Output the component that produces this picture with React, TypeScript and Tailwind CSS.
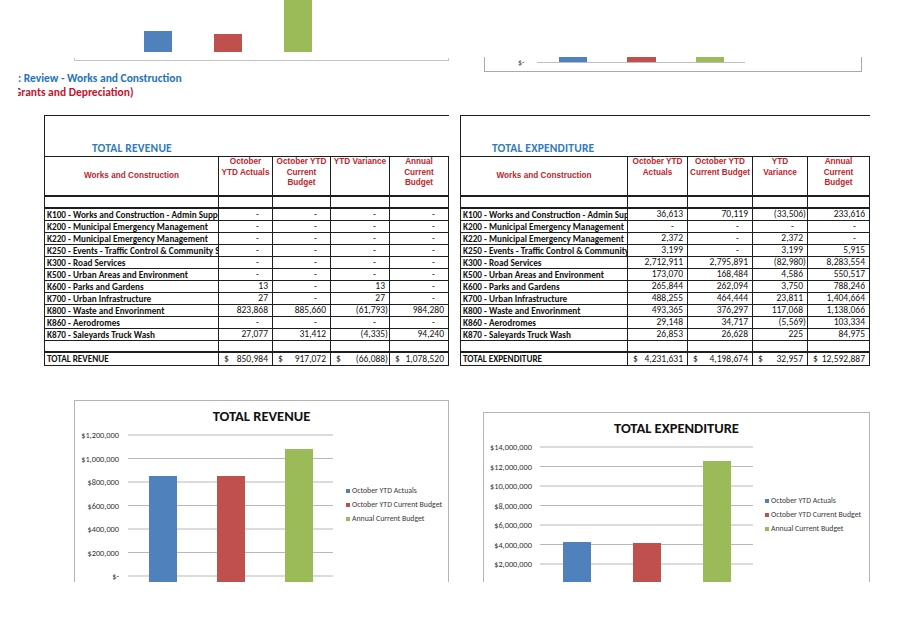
import React from "react";

const CAL = "font-['Carlito','Liberation_Sans_Narrow','Lato',sans-serif] lining-nums";
const ARIAL = "font-['Liberation_Sans',Arial,sans-serif]";
const SVGFONT = "Carlito, 'Liberation Sans Narrow', Lato, sans-serif";

type Row = { name: string; vals: string[] };

const revRows: Row[] = [
  { name: "K100 - Works and Construction - Admin Support", vals: ["-", "-", "-", "-"] },
  { name: "K200 - Municipal Emergency Management", vals: ["-", "-", "-", "-"] },
  { name: "K220 - Municipal Emergency Management", vals: ["-", "-", "-", "-"] },
  { name: "K250 - Events - Traffic Control & Community Safety", vals: ["-", "-", "-", "-"] },
  { name: "K300 - Road Services", vals: ["-", "-", "-", "-"] },
  { name: "K500 - Urban Areas and Environment", vals: ["-", "-", "-", "-"] },
  { name: "K600 - Parks and Gardens", vals: ["13", "-", "13", "-"] },
  { name: "K700 - Urban Infrastructure", vals: ["27", "-", "27", "-"] },
  { name: "K800 - Waste and Envorinment", vals: ["823,868", "885,660", "(61,793)", "984,280"] },
  { name: "K860 - Aerodromes", vals: ["-", "-", "-", "-"] },
  { name: "K870 - Saleyards Truck Wash", vals: ["27,077", "31,412", "(4,335)", "94,240"] },
];

const expRows: Row[] = [
  { name: "K100 - Works and Construction - Admin Support", vals: ["36,613", "70,119", "(33,506)", "233,616"] },
  { name: "K200 - Municipal Emergency Management", vals: ["-", "-", "-", "-"] },
  { name: "K220 - Municipal Emergency Management", vals: ["2,372", "-", "2,372", "-"] },
  { name: "K250 - Events - Traffic Control & Community Safety", vals: ["3,199", "-", "3,199", "5,915"] },
  { name: "K300 - Road Services", vals: ["2,712,911", "2,795,891", "(82,980)", "8,283,554"] },
  { name: "K500 - Urban Areas and Environment", vals: ["173,070", "168,484", "4,586", "550,517"] },
  { name: "K600 - Parks and Gardens", vals: ["265,844", "262,094", "3,750", "788,246"] },
  { name: "K700 - Urban Infrastructure", vals: ["488,255", "464,444", "23,811", "1,404,664"] },
  { name: "K800 - Waste and Envorinment", vals: ["493,365", "376,297", "117,068", "1,138,066"] },
  { name: "K860 - Aerodromes", vals: ["29,148", "34,717", "(5,569)", "103,334"] },
  { name: "K870 - Saleyards Truck Wash", vals: ["26,853", "26,628", "225", "84,975"] },
];

function padFor(v: string) {
  if (v === "-") return "pr-[13px]";
  if (v.startsWith("(")) return "pr-[1px]";
  return "pr-[4px]";
}

function Table(props: {
  title: string;
  titlePad: string;
  cols: string;
  headers: React.ReactNode[];
  rows: Row[];
  totalLabel: string;
  totals: string[];
}) {
  const { title, titlePad, cols, headers, rows, totalLabel, totals } = props;
  const line = "border-[#1e1e1e]";
  return (
    <div className={`border-l ${line} w-fit`}>
      <div className={`h-[41px] border-t ${line} flex items-end ${titlePad}`}>
        <span className={`${CAL} text-[11.5px] leading-[15px] font-bold text-[#2e7bc0] tracking-[0.2px]`}>{title}</span>
      </div>
      <div className={`grid ${cols} border-t ${line}`}>
        {headers.map((h, i) =>
          i === 0 ? (
            <div key={i} className={`h-[40px] border-r border-b-2 ${line} flex items-center justify-center ${ARIAL} text-[8.2px] font-bold text-[#c0252b]`}>
              {h}
            </div>
          ) : (
            <div key={i} className={`h-[40px] border-r border-b-2 ${line} text-center ${ARIAL} text-[8.2px] leading-[10.5px] font-bold text-[#c0252b] whitespace-nowrap`}>
              {h}
            </div>
          )
        )}
      </div>
      <div className={`grid ${cols}`}>
        {[0, 1, 2, 3, 4].map((i) => (
          <div key={i} className={`h-[12px] border-r border-b-2 ${line}`} />
        ))}
      </div>
      {rows.map((r) => (
        <div key={r.name} className={`grid ${cols}`}>
          <div className={`h-[12px] border-r border-b ${line} overflow-hidden whitespace-nowrap pl-[2px] ${CAL} text-[9.2px] leading-[11px] font-bold text-[#111]`}>
            {r.name}
          </div>
          {r.vals.map((v, i) => (
            <div key={i} className={`h-[12px] border-r border-b ${line} text-right whitespace-nowrap ${padFor(v)} ${CAL} text-[9.5px] leading-[11px] text-[#111]`}>
              {v}
            </div>
          ))}
        </div>
      ))}
      <div className={`grid ${cols}`}>
        {[0, 1, 2, 3, 4].map((i) => (
          <div key={i} className={`h-[12px] border-r border-b-2 ${line}`} />
        ))}
      </div>
      <div className={`grid ${cols}`}>
        <div className={`h-[13px] border-r border-b ${line} pl-[2px] ${CAL} text-[9.2px] leading-[12px] font-bold text-[#111]`}>
          {totalLabel}
        </div>
        {totals.map((v, i) => (
          <div key={i} className={`h-[13px] border-r border-b ${line} flex justify-between whitespace-nowrap pl-[5px] ${padFor(v)} ${CAL} text-[9.5px] leading-[12px] text-[#111]`}>
            <span>$</span>
            <span>{v}</span>
          </div>
        ))}
      </div>
    </div>
  );
}

function Legend() {
  const items = [
    { c: "bg-[#4f81bd]", t: "October YTD Actuals" },
    { c: "bg-[#c0504d]", t: "October YTD Current Budget" },
    { c: "bg-[#9bbb59]", t: "Annual Current Budget" },
  ];
  return (
    <div className="flex flex-col">
      {items.map((it) => (
        <div key={it.t} className={`h-[14px] flex items-center gap-[2px] ${CAL} text-[7.8px] text-[#3a3a3a] whitespace-nowrap`}>
          <span className={`w-[4px] h-[4px] ${it.c}`} />
          <span>{it.t}</span>
        </div>
      ))}
    </div>
  );
}

function RevenueChart() {
  const grid = [
    { y: 7, l: "$1,200,000" },
    { y: 30.5, l: "$1,000,000" },
    { y: 54, l: "$800,000" },
    { y: 77.5, l: "$600,000" },
    { y: 101, l: "$400,000" },
    { y: 124.5, l: "$200,000" },
    { y: 148, l: "$-" },
  ];
  return (
    <div className="w-[375px] h-[182px] border-l border-t border-r border-[#b4b4b4] flex flex-col overflow-hidden">
      <div className={`h-[27px] pt-[7px] text-center ${CAL} text-[14.5px] leading-[16px] font-bold text-[#111]`}>TOTAL REVENUE</div>
      <div className="flex">
        <svg width="262" height="154" className="shrink-0">
          {grid.map((g) => (
            <g key={g.l}>
              <line x1="53" x2="258" y1={g.y} y2={g.y} stroke="#b8b8b8" strokeWidth="1" />
              <text x="44" y={g.y + 3} textAnchor="end" fontSize="8.3" fill="#333" fontFamily={SVGFONT} className="lining-nums">
                {g.l}
              </text>
            </g>
          ))}
          <rect x="74" y="48" width="28" height="106" fill="#4f81bd" />
          <rect x="142" y="48" width="28" height="106" fill="#c0504d" />
          <rect x="210" y="21" width="28" height="133" fill="#9bbb59" />
        </svg>
        <div className="ml-[9px] pt-[56px]">
          <Legend />
        </div>
      </div>
    </div>
  );
}

function ExpenditureChart() {
  const grid = [
    { y: 7, l: "$14,000,000" },
    { y: 26.5, l: "$12,000,000" },
    { y: 46, l: "$10,000,000" },
    { y: 65.5, l: "$8,000,000" },
    { y: 85, l: "$6,000,000" },
    { y: 104.5, l: "$4,000,000" },
    { y: 124, l: "$2,000,000" },
    { y: 143.5, l: "$-" },
  ];
  return (
    <div className="w-[387px] h-[170px] border-l border-t border-r border-[#b4b4b4] flex flex-col overflow-hidden">
      <div className={`h-[27px] pt-[7px] text-center ${CAL} text-[14.5px] leading-[16px] font-bold text-[#111]`}>TOTAL EXPENDITURE</div>
      <div className="flex">
        <svg width="275" height="142" className="shrink-0">
          {grid.map((g) => (
            <g key={g.l}>
              <line x1="56" x2="269" y1={g.y} y2={g.y} stroke="#b8b8b8" strokeWidth="1" />
              <text x="48" y={g.y + 3} textAnchor="end" fontSize="8.3" fill="#333" fontFamily={SVGFONT} className="lining-nums">
                {g.l}
              </text>
            </g>
          ))}
          <rect x="79" y="102" width="28" height="40" fill="#4f81bd" />
          <rect x="149" y="103" width="28" height="39" fill="#c0504d" />
          <rect x="219" y="21" width="28" height="121" fill="#9bbb59" />
        </svg>
        <div className="ml-[6px] pt-[54px]">
          <Legend />
        </div>
      </div>
    </div>
  );
}

export default function App() {
  const revHeaders: React.ReactNode[] = [
    "Works and Construction",
    <>October<br />YTD Actuals</>,
    <>October YTD<br />Current<br />Budget</>,
    <>YTD Variance</>,
    <>Annual<br />Current<br />Budget</>,
  ];
  const expHeaders: React.ReactNode[] = [
    "Works and Construction",
    <>October YTD<br />Actuals</>,
    <>October YTD<br />Current Budget</>,
    <>YTD<br />Variance</>,
    <>Annual<br />Current<br />Budget</>,
  ];
  return (
    <div className="w-[907px] h-[641px] bg-white overflow-hidden">
      {/* top remnants of previous page charts */}
      <div className="h-[71px] flex items-start">
        <svg width="375" height="71" className="ml-[74px] shrink-0">
          <rect x="70" y="31" width="28" height="21" fill="#4f81bd" />
          <rect x="140" y="34" width="28" height="18" fill="#c0504d" />
          <rect x="210" y="0" width="28" height="52" fill="#9bbb59" />
          <line x1="0" x2="375" y1="60.5" y2="60.5" stroke="#c4c4c4" />
          <line x1="0.5" x2="0.5" y1="58" y2="61" stroke="#c4c4c4" />
          <line x1="374.5" x2="374.5" y1="58" y2="61" stroke="#c4c4c4" />
        </svg>
        <div className="ml-[35px] mt-[57px] w-[378px] h-[15px] border-l border-r border-b border-[#aaaaaa]">
          <svg width="376" height="14">
            <text x="33" y="8" fontSize="8" fill="#3a3a3a" fontFamily={SVGFONT}>$-</text>
            <line x1="52" x2="260" y1="5.5" y2="5.5" stroke="#bdbdbd" />
            <rect x="74" y="0" width="28" height="5" fill="#4f81bd" />
            <rect x="142" y="0" width="29" height="5" fill="#c0504d" />
            <rect x="211" y="0" width="28" height="5" fill="#9bbb59" />
          </svg>
        </div>
      </div>

      {/* heading */}
      <div className={`pl-[18px] ${CAL} font-bold text-[11.5px]`}>
        <div className="h-[14px] leading-[14px] text-[#2373bd] whitespace-nowrap">: Review - Works and Construction</div>
        <div className="h-[14px] leading-[14px] text-[#c8102e] overflow-hidden whitespace-nowrap">
          <span className="-ml-[4px] inline-block">Grants and Depreciation)</span>
        </div>
      </div>

      {/* tables */}
      <div className="mt-[16px] flex items-start">
        <div className="ml-[44px]">
          <Table
            title="TOTAL REVENUE"
            titlePad="pl-[47px]"
            cols="grid-cols-[174px_54px_58px_59px_59px]"
            headers={revHeaders}
            rows={revRows}
            totalLabel="TOTAL REVENUE"
            totals={["850,984", "917,072", "(66,088)", "1,078,520"]}
          />
        </div>
        <div className="ml-[11px]">
          <Table
            title="TOTAL EXPENDITURE"
            titlePad="pl-[31px]"
            cols="grid-cols-[167px_60px_65px_55px_62px]"
            headers={expHeaders}
            rows={expRows}
            totalLabel="TOTAL EXPENDITURE"
            totals={["4,231,631", "4,198,674", "32,957", "12,592,887"]}
          />
        </div>
      </div>

      {/* charts */}
      <div className="mt-[34px] flex items-start">
        <div className="ml-[74px]">
          <RevenueChart />
        </div>
        <div className="ml-[34px] mt-[12px]">
          <ExpenditureChart />
        </div>
      </div>
    </div>
  );
}
